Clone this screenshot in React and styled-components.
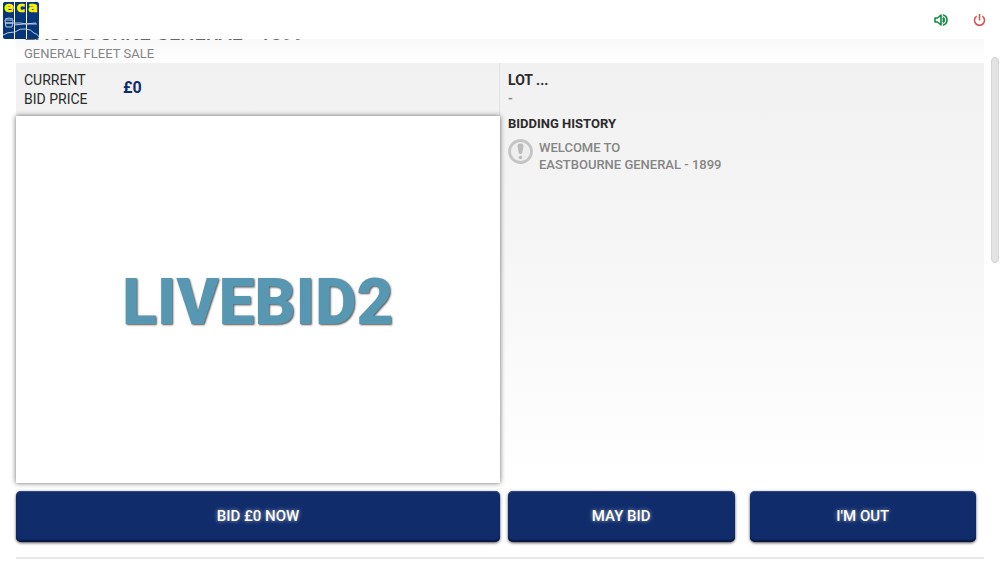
import React from "react";
import styled, { createGlobalStyle } from "styled-components";

const Global = createGlobalStyle`
  * { box-sizing: border-box; }
  html, body { margin: 0; background: #fff; }
  body {
    font-family: Roboto, "Liberation Sans", sans-serif;
    color: #2b2b2b;
    text-transform: uppercase;
    overflow: hidden;
  }
  h1, h2, p, dl, dt, dd { margin: 0; padding: 0; }
`;

const TopBar = styled.header`
  position: relative;
  z-index: 2;
  display: flex;
  align-items: center;
  justify-content: space-between;
  height: 39px;
  padding: 0 14px 0 2px;
  background: #fff;
`;

const LogoLink = styled.a`
  display: block;
  height: 37px;
  margin-top: 2px;
  text-transform: none;

  svg { overflow: visible; }
`;

const Tools = styled.nav`
  display: flex;
  gap: 25px;
`;

const IconButton = styled.button`
  display: flex;
  padding: 0;
  border: 0;
  background: none;
  color: ${(p) => p.$tone};
  cursor: pointer;
`;

const Page = styled.div`
  display: flex;
  align-items: flex-start;
`;

const Main = styled.main`
  flex: 1;
  min-width: 0;
  margin: -18px 0 0 16px;
`;

const SaleHead = styled.div`
  padding: 0 8px;
  background: linear-gradient(#f8f8f8 18px, #fff);
`;

const SaleTitle = styled.h1`
  font-size: 20px;
  font-weight: 500;
  line-height: 24px;
  white-space: nowrap;
  color: #666;
`;

const SaleType = styled.p`
  font-size: 13px;
  line-height: 18px;
  color: #858585;
`;

const Board = styled.section`
  display: grid;
  grid-template-columns: 1fr 1fr;
  background: linear-gradient(#f1f1f1, #f5f5f5 40%, #fff);
`;

const PriceColumn = styled.div`
  display: flex;
  flex-direction: column;
`;

const Price = styled.dl`
  display: flex;
  height: 53px;
  padding: 8px 8px 0;
  border-right: 1px solid #e2e2e2;
`;

const PriceLabel = styled.dt`
  width: 99px;
  font-size: 14px;
  line-height: 19px;
`;

const PriceValue = styled.dd`
  font-size: 16px;
  font-weight: 700;
  line-height: 34px;
  color: #102c6b;
`;

const Screen = styled.div`
  display: grid;
  place-items: center;
  height: 367px;
  padding-top: 6px;
  margin-bottom: 1px;
  background: #fff;
  box-shadow: 0 0 5px rgba(0, 0, 0, 0.6);
`;

const Brand = styled.p`
  font-size: 64px;
  font-weight: 900;
  line-height: 64px;
  color: #5797b2;
  text-shadow: 1px 1px 2px #555;
`;

const LotColumn = styled.div`
  padding: 8px;
`;

const LotTitle = styled.h2`
  font-size: 14px;
  font-weight: 700;
  line-height: 18px;
`;

const LotText = styled.p`
  padding-bottom: 8px;
  font-size: 14px;
  font-weight: 500;
  line-height: 18px;
  color: #858585;
`;

const HistoryTitle = styled(LotTitle)`
  font-size: 13px;
`;

const Notice = styled.div`
  display: flex;
  gap: 6px;
  padding-top: 6px;
  font-size: 13px;
  font-weight: 500;
  line-height: 17px;
  color: #858585;
`;

const Actions = styled.div`
  display: grid;
  grid-template-columns: 1fr 1fr;
  padding: 7px 0 15px;
  border-bottom: 2px solid #e8e8e8;
`;

const Responses = styled.div`
  display: grid;
  grid-template-columns: 1fr 1fr;
  gap: 15px;
  padding: 0 8px;
`;

const BidButton = styled.button`
  height: 51px;
  padding: 0 0 2px;
  border: 0;
  border-radius: 5px;
  background: #102c6b;
  color: #fff;
  font: 500 15px/18px Roboto, "Liberation Sans", sans-serif;
  text-transform: uppercase;
  text-shadow: 0 0 4px rgba(255, 255, 255, 0.6);
  box-shadow: inset 0 -2px 1px #091a42, inset 0 1px 0 #324a80, 0 1px 3px rgba(0, 0, 0, 0.7);
  cursor: pointer;
`;

const Gutter = styled.div`
  width: 16px;
  padding: 18px 1px 0 7px;
`;

const Thumb = styled.div`
  height: 206px;
  border: 1px solid #d5d5d5;
  border-radius: 4px;
  background: #e3e3e3;
`;

function Logo() {
  return (
    <svg width="38" height="37" viewBox="0 0 38 37" role="img" aria-label="ECA">
      <rect x="1" width="36" height="37" rx="2" fill="#063579" />
      <path d="M12.500 0V37M24.500 0V37" stroke="#fff" strokeWidth="1" />
      <g fontFamily="DejaVu Sans, sans-serif" fontWeight="700" fontSize="14" fill="#fff200" stroke="#fff200" strokeWidth=".7" textAnchor="middle">
        <text x="7" y="10">e</text>
        <text x="19" y="10">c</text>
        <text x="31" y="10">a</text>
      </g>
      <g fill="none" stroke="#b6c9df" strokeWidth="1">
        <path d="M3 18h8l-1 7H4zM3 17q4-2 8 0M11 21h7l7 1h10M12 23l10-1 12-1" />
        <path d="M1 33q4-3 12-3 5-4 10-3 6 0 9 4 4 1 5 4" />
      </g>
      <path d="M4 20h6v2H4z" fill="#8eabd0" />
    </svg>
  );
}

function SoundIcon() {
  return (
    <svg width="14" height="14" viewBox="0 0 14 14" fill="none" stroke="currentColor" strokeWidth="1.600" aria-hidden="true">
      <path d="M1 5h2.500L7 2v10L3.500 9H1z" strokeLinejoin="round" />
      <path d="M8.800 5q1.800 2 0 4M9 1.800q4 1.200 4 5.200t-4 5.200" />
      <path d="M9 3.500q3.500 3.500 0 7" strokeWidth="1" />
    </svg>
  );
}

function PowerIcon() {
  return (
    <svg width="13" height="14" viewBox="0 0 13 14" fill="none" stroke="currentColor" strokeWidth="1.600" aria-hidden="true">
      <path d="M6.500 1v6.500M3.700 3.200a5 5 0 1 0 5.600 0" />
    </svg>
  );
}

function NoticeIcon() {
  return (
    <svg width="25" height="25" viewBox="0 0 25 25" aria-hidden="true">
      <circle cx="12.500" cy="12.500" r="11" fill="#eee" stroke="#c5c5c5" strokeWidth="2.800" />
      <path d="M9.500 7q0-2.500 3-2.500t3 2.500l-1.200 7q-1.800 2-3.600 0z" fill="#bbb" />
      <circle cx="12.500" cy="18.500" r="1.800" fill="#bbb" />
    </svg>
  );
}

export default function App() {
  return (
    <>
      <Global />
      <TopBar>
        <LogoLink href="#" aria-label="ECA home"><Logo /></LogoLink>
        <Tools>
          <IconButton type="button" aria-label="Sound" $tone="#128c40"><SoundIcon /></IconButton>
          <IconButton type="button" aria-label="Leave sale" $tone="#cf5858"><PowerIcon /></IconButton>
        </Tools>
      </TopBar>
      <Page>
        <Main>
          <SaleHead>
            <SaleTitle>Eastbourne General - 1899</SaleTitle>
            <SaleType>General Fleet Sale</SaleType>
          </SaleHead>
          <Board>
            <PriceColumn>
              <Price>
                <PriceLabel>Current<br />bid price</PriceLabel>
                <PriceValue>£0</PriceValue>
              </Price>
              <Screen><Brand>Livebid2</Brand></Screen>
            </PriceColumn>
            <LotColumn>
              <LotTitle>Lot ...</LotTitle>
              <LotText>-</LotText>
              <HistoryTitle>Bidding history</HistoryTitle>
              <Notice>
                <NoticeIcon />
                <p>Welcome to<br />Eastbourne General - 1899</p>
              </Notice>
            </LotColumn>
          </Board>
          <Actions>
            <BidButton type="button">Bid £0 now</BidButton>
            <Responses>
              <BidButton type="button">May bid</BidButton>
              <BidButton type="button">I'm out</BidButton>
            </Responses>
          </Actions>
        </Main>
        <Gutter><Thumb /></Gutter>
      </Page>
    </>
  );
}
